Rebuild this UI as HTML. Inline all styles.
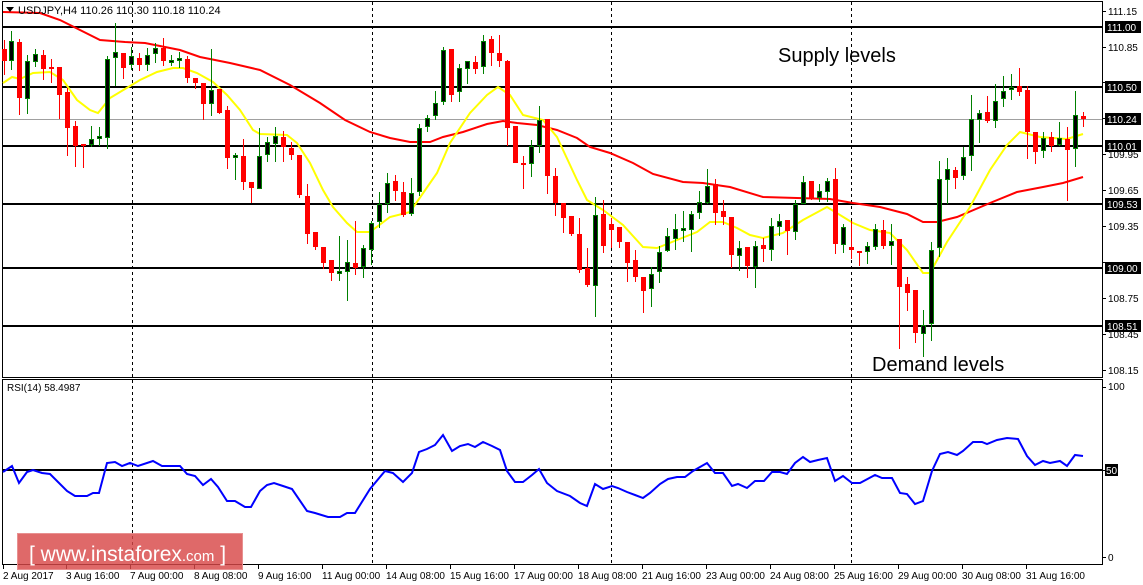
<!DOCTYPE html>
<html><head><meta charset="utf-8"><style>
html,body{margin:0;padding:0;background:#fff;width:1143px;height:585px;overflow:hidden}
svg{display:block;font-family:"Liberation Sans",sans-serif}
</style></head><body>
<svg width="1143" height="585" viewBox="0 0 1143 585" xmlns="http://www.w3.org/2000/svg">
<rect width="1143" height="585" fill="#fff"/>
<!-- frames -->
<rect x="2.5" y="1.5" width="1100" height="376" fill="none" stroke="#000"/>
<rect x="2.5" y="379.5" width="1100" height="185" fill="none" stroke="#000"/>
<!-- dashed verticals -->
<g stroke="#000" stroke-dasharray="3,3" stroke-width="1">
<path d="M132.5 2V377M372.5 2V377M611.5 2V377M851.5 2V377"/>
<path d="M132.5 380V564M372.5 380V564M611.5 380V564M851.5 380V564"/>
</g>
<!-- gray line -->
<path d="M3 119.5H1102" stroke="#a0a0a0"/>
<!-- level lines -->
<g stroke="#000" stroke-width="2">
<path d="M3 27H1102M3 87H1102M3 146H1102M3 204H1102M3 268H1102M3 326H1102"/>
</g>
<!-- red MA -->
<polyline fill="none" stroke="#f00" stroke-width="2" points="3,12 40,13 60,20 70,25 100,40 125,42 145,43 180,50 200,57 230,63 260,70 290,85 320,103 345,120 370,132 390,138 410,142 430,142 443,137 463,132 487,124 503,121 517,123 537,125 557,130 577,138 590,147 610,153 633,163 653,174 683,182 703,183 723,186 730,187 763,197 797,198 830,199 853,203 880,207 907,214 923,222 937,222 957,217 990,203 1017,192 1043,187 1063,183 1083,177"/>
<!-- yellow MA -->
<polyline fill="none" stroke="#ff0" stroke-width="2" points="3,83 12,77 20,79 33,73 50,72 63,80 77,100 90,110 98,113 110,98 120,92 140,80 157,72 173,68 183,68 197,73 213,82 227,95 240,110 253,130 260,134 287,135 297,143 310,163 323,190 333,207 347,223 357,232 370,232 390,217 410,212 437,173 450,143 470,113 487,95 498,87 510,95 523,115 543,120 557,137 577,180 587,200 603,210 623,225 643,247 657,248 677,240 697,232 710,222 723,222 737,228 750,235 763,238 783,233 803,220 827,207 853,223 870,230 890,233 907,250 923,273 930,273 947,242 970,207 990,170 1007,145 1020,132 1040,137 1067,139 1083,134"/>
<!-- red candles -->
<path stroke="#f00" stroke-width="1" fill="none" d="M4.5 40V75M19.5 39V115M43.5 50V80M51.5 59V83M59.5 67V119M67.5 88V156M75.5 121V167M83.5 144V168M123.5 53V79M139.5 53V71M163.5 38V66M187.5 56V83M195.5 78V89M203.5 83V120M219.5 89V114M227.5 106V169M243.5 139V190M251.5 182V203M283.5 131V162M291.5 142V160M299.5 155V198M307.5 184V244M315.5 232V250M323.5 247V269M331.5 260V281M355.5 221V275M395.5 175V201M403.5 182V217M451.5 49V102M475.5 56V74M491.5 36V66M499.5 35V67M507.5 60V146M515.5 126V163M523.5 156V189M547.5 119V194M555.5 168V216M563.5 203V233M571.5 216V236M579.5 218V273M587.5 248V287M603.5 200V253M611.5 218V248M619.5 227V248M627.5 242V282M635.5 250V282M643.5 277V313M715.5 179V225M723.5 200V225M731.5 217V268M747.5 247V278M763.5 238V262M787.5 220V255M811.5 181V200M835.5 168V254M851.5 221V259M859.5 251V266M883.5 220V249M899.5 239V349M907.5 277V311M915.5 290V343M955.5 167V189M987.5 96V123M1019.5 68V96M1027.5 86V159M1035.5 132V164M1051.5 132V152M1067.5 127V201M1083.5 112V127"/>
<path fill="#f00" d="M2 49h5v12h-5zM17 42h5v56h-5zM41 55h5v14h-5zM49 67h5v2h-5zM57 67h5v28h-5zM65 92h5v36h-5zM73 126h5v20h-5zM81 144h5v2h-5zM121 53h5v15h-5zM137 58h5v7h-5zM161 48h5v13h-5zM185 59h5v19h-5zM193 78h5v5h-5zM201 83h5v21h-5zM217 89h5v24h-5zM225 110h5v48h-5zM241 156h5v26h-5zM249 182h5v6h-5zM281 137h5v10h-5zM289 148h5v7h-5zM297 155h5v40h-5zM305 196h5v38h-5zM313 232h5v15h-5zM321 247h5v16h-5zM329 260h5v13h-5zM353 263h5v5h-5zM393 181h5v10h-5zM401 192h5v23h-5zM449 49h5v46h-5zM473 62h5v7h-5zM489 39h5v14h-5zM497 53h5v8h-5zM505 61h5v67h-5zM513 126h5v37h-5zM521 163h5v2h-5zM545 119h5v57h-5zM553 176h5v27h-5zM561 203h5v15h-5zM569 216h5v18h-5zM577 234h5v36h-5zM585 268h5v17h-5zM601 214h5v32h-5zM609 224h5v6h-5zM617 227h5v15h-5zM625 242h5v21h-5zM633 260h5v17h-5zM641 277h5v14h-5zM713 184h5v29h-5zM721 211h5v6h-5zM729 217h5v38h-5zM745 247h5v19h-5zM761 245h5v4h-5zM785 220h5v11h-5zM809 181h5v17h-5zM833 179h5v65h-5zM849 247h5v3h-5zM857 251h5v2h-5zM881 230h5v16h-5zM897 239h5v48h-5zM905 284h5v9h-5zM913 290h5v43h-5zM953 170h5v8h-5zM985 112h5v9h-5zM1017 86h5v6h-5zM1025 90h5v42h-5zM1033 132h5v20h-5zM1049 137h5v9h-5zM1065 139h5v11h-5zM1081 116h5v3h-5z"/>
<!-- green candles -->
<path stroke="#008000" stroke-width="1" fill="none" d="M11.5 31V70M27.5 55V114M35.5 49V67M91.5 126V147M99.5 127V146M107.5 56V149M115.5 23V86M131.5 47V70M147.5 48V71M155.5 43V63M171.5 55V66M179.5 52V68M211.5 49V116M235.5 153V180M259.5 128V189M267.5 137V162M275.5 127V162M339.5 236V281M347.5 240V301M363.5 245V278M371.5 221V265M379.5 192V228M387.5 173V213M411.5 178V216M419.5 124V196M427.5 115V132M435.5 91V120M443.5 47V105M459.5 64V102M467.5 61V84M483.5 35V74M531.5 140V177M539.5 106V153M595.5 197V317M651.5 267V307M659.5 246V283M667.5 228V252M675.5 214V250M683.5 211V242M691.5 211V252M699.5 191V219M707.5 169V204M739.5 241V271M755.5 241V288M771.5 218V261M779.5 214V236M795.5 200V240M803.5 176V204M819.5 184V202M827.5 178V202M843.5 224V253M867.5 242V264M875.5 224V250M891.5 224V265M923.5 310V357M931.5 242V341M939.5 161V257M947.5 158V204M963.5 147V180M971.5 95V171M979.5 110V143M995.5 84V128M1003.5 76V107M1011.5 74V100M1043.5 132V158M1059.5 122V146M1075.5 91V167"/>
<path fill="#000" stroke="#008000" stroke-width="1" d="M9.5 41.5h4v19h-4zM25.5 61.5h4v37h-4zM33.5 54.5h4v7h-4zM89.5 139.5h4v5h-4zM97.5 136.5h4v2h-4zM105.5 59.5h4v78h-4zM113.5 52.5h4v5h-4zM129.5 56.5h4v8h-4zM145.5 55.5h4v9h-4zM153.5 48.5h4v5h-4zM169.5 60.5h4v2h-4zM177.5 58.5h4v2h-4zM209.5 90.5h4v13h-4zM233.5 155.5h4v2h-4zM257.5 156.5h4v32h-4zM265.5 142.5h4v12h-4zM273.5 136.5h4v7h-4zM337.5 271.5h4v2h-4zM345.5 262.5h4v9h-4zM361.5 248.5h4v18h-4zM369.5 223.5h4v26h-4zM377.5 204.5h4v17h-4zM385.5 183.5h4v20h-4zM409.5 193.5h4v20h-4zM417.5 128.5h4v63h-4zM425.5 118.5h4v8h-4zM433.5 103.5h4v12h-4zM441.5 50.5h4v51h-4zM457.5 68.5h4v23h-4zM465.5 61.5h4v7h-4zM481.5 41.5h4v25h-4zM529.5 146.5h4v17h-4zM537.5 120.5h4v25h-4zM593.5 215.5h4v70h-4zM649.5 274.5h4v14h-4zM657.5 252.5h4v19h-4zM665.5 236.5h4v14h-4zM673.5 229.5h4v9h-4zM681.5 228.5h4v2h-4zM689.5 214.5h4v15h-4zM697.5 202.5h4v10h-4zM705.5 186.5h4v16h-4zM737.5 248.5h4v7h-4zM753.5 246.5h4v20h-4zM769.5 226.5h4v23h-4zM777.5 221.5h4v5h-4zM793.5 204.5h4v27h-4zM801.5 182.5h4v21h-4zM817.5 191.5h4v6h-4zM825.5 181.5h4v10h-4zM841.5 227.5h4v17h-4zM865.5 246.5h4v5h-4zM873.5 229.5h4v17h-4zM889.5 241.5h4v4h-4zM921.5 325.5h4v8h-4zM929.5 250.5h4v73h-4zM937.5 179.5h4v68h-4zM945.5 169.5h4v10h-4zM961.5 157.5h4v18h-4zM969.5 119.5h4v36h-4zM977.5 113.5h4v6h-4zM993.5 101.5h4v19h-4zM1001.5 91.5h4v7h-4zM1009.5 87.5h4v2h-4zM1041.5 138.5h4v12h-4zM1057.5 138.5h4v6h-4zM1073.5 115.5h4v33h-4z"/>
<!-- header -->
<path d="M6 7h8l-4 5z" fill="#000"/>
<text x="18" y="14" font-size="11" fill="#000">USDJPY,H4  110.26 110.30 110.18 110.24</text>
<text x="778" y="62" font-size="20" fill="#000">Supply levels</text>
<text x="872" y="371" font-size="20" fill="#000">Demand levels</text>
<!-- price axis -->
<g stroke="#000"><path d="M1102 11.5h4M1102 47.5h4M1102 82.5h4M1102 118.5h4M1102 154.5h4M1102 190.5h4M1102 226.5h4M1102 262.5h4M1102 298.5h4M1102 334.5h4M1102 370.5h4M1102 387.5h4M1102 470.5h4M1102 557.5h4"/></g>
<g font-size="10" fill="#000">
<text x="1108" y="15">111.15</text><text x="1108" y="51">110.85</text><text x="1108" y="158">109.95</text><text x="1108" y="194">109.65</text><text x="1108" y="230">109.35</text><text x="1108" y="302">108.75</text><text x="1108" y="338">108.45</text><text x="1108" y="374">108.15</text>
<text x="1108" y="390">100</text><text x="1108" y="561">0</text>
</g>
<g fill="#000"><rect x="1105" y="21" width="36" height="12"/><rect x="1105" y="81" width="36" height="12"/><rect x="1105" y="113" width="36" height="12"/><rect x="1105" y="140" width="36" height="12"/><rect x="1105" y="198" width="36" height="12"/><rect x="1105" y="262" width="36" height="12"/><rect x="1105" y="320" width="36" height="12"/><rect x="1105" y="464" width="13" height="12"/></g>
<g font-size="10" fill="#fff">
<text x="1107" y="31">111.00</text><text x="1107" y="91">110.50</text><text x="1107" y="123">110.24</text><text x="1107" y="150">110.01</text><text x="1107" y="208">109.53</text><text x="1107" y="272">109.00</text><text x="1107" y="330">108.51</text><text x="1106" y="474">50</text>
</g>
<!-- RSI -->
<text x="7" y="391" font-size="10" fill="#000">RSI(14) 58.4987</text>
<path d="M3 470H1102" stroke="#000" stroke-width="2"/>
<polyline fill="none" stroke="#00f" stroke-width="2" points="3,472 12,466 19,483 27,472 33,470 42,473 50,474 67,491 75,496 87,496 93,493 99,493 107,463 115,462 122,466 130,463 138,466 153,461 162,466 180,466 187,474 195,476 203,485 211,479 218,487 227,501 235,501 245,507 251,507 260,491 267,485 274,483 283,486 292,489 307,511 315,513 328,517 340,517 347,513 355,513 370,489 385,471 393,473 403,482 412,473 419,452 427,449 435,445 443,435 452,451 460,446 468,444 475,447 483,442 492,446 500,450 507,471 515,482 523,482 532,475 539,469 547,483 557,491 570,496 580,503 587,506 595,484 603,489 612,486 618,488 627,492 643,498 650,493 660,484 668,479 677,477 685,477 693,471 707,463 715,473 723,473 732,486 738,484 747,488 755,481 764,481 772,472 780,472 787,474 795,463 803,457 810,462 818,460 827,458 835,481 843,476 852,483 860,483 875,475 882,478 892,478 900,493 907,494 915,504 923,501 932,471 940,454 948,452 957,455 963,451 973,442 982,442 987,444 997,440 1007,438 1018,439 1027,456 1035,465 1043,461 1050,463 1060,461 1067,466 1075,455 1083,456"/>
<!-- time axis -->
<g stroke="#000"><path d="M3.5 565v4M66.5 565v4M130.5 565v4M194.5 565v4M258.5 565v4M322.5 565v4M386.5 565v4M450.5 565v4M514.5 565v4M578.5 565v4M642.5 565v4M706.5 565v4M770.5 565v4M834.5 565v4M898.5 565v4M962.5 565v4M1026.5 565v4"/></g>
<g font-size="10" fill="#000">
<text x="3" y="579">2 Aug 2017</text><text x="66" y="579">3 Aug 16:00</text><text x="130" y="579">7 Aug 00:00</text><text x="194" y="579">8 Aug 08:00</text><text x="258" y="579">9 Aug 16:00</text><text x="322" y="579">11 Aug 00:00</text><text x="386" y="579">14 Aug 08:00</text><text x="450" y="579">15 Aug 16:00</text><text x="514" y="579">17 Aug 00:00</text><text x="578" y="579">18 Aug 08:00</text><text x="642" y="579">21 Aug 16:00</text><text x="706" y="579">23 Aug 00:00</text><text x="770" y="579">24 Aug 08:00</text><text x="834" y="579">25 Aug 16:00</text><text x="898" y="579">29 Aug 00:00</text><text x="962" y="579">30 Aug 08:00</text><text x="1026" y="579">31 Aug 16:00</text>
</g>
<!-- logo -->
<rect x="17" y="533" width="226" height="37" fill="#d84848" fill-opacity="0.82"/>
<rect x="17.5" y="533.5" width="225" height="36" fill="none" stroke="#e89090" stroke-width="1"/>
<text x="29" y="561" font-size="21" fill="#fff">[ www.instaforex<tspan font-size="15">.com</tspan> ]</text>
</svg>
</body></html>
